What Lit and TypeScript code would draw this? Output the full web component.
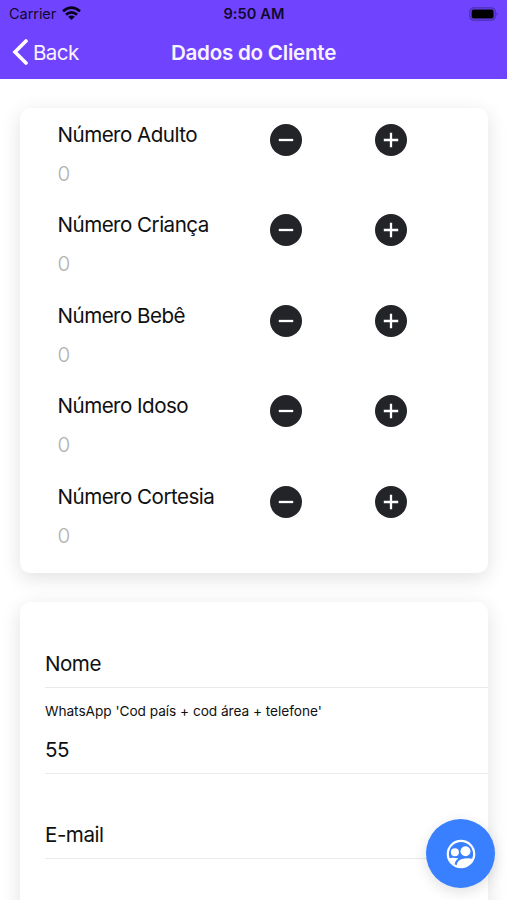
import { LitElement, html, css } from "lit";
import { customElement } from "lit/decorators.js";

@customElement("app-root")
export class AppRoot extends LitElement {
  static styles = css`
    :host { display: block; position: relative; height: 900px; overflow: hidden; background: #fff; font-family: Inter, "Liberation Sans", sans-serif; color: #101010; }
    * { box-sizing: border-box; }
    header { height: 79px; background: #7044ff; }
    .status { height: 27px; display: grid; grid-template-columns: 1fr auto 1fr; align-items: center; padding: 1px 8px 0 9px; color: #12082e; font-size: 14.6px; }
    .carrier { display: flex; align-items: center; gap: 6px; letter-spacing: -0.1px; }
    .wifi { width: 19px; height: 14px; margin-top: -2px; }
    .time { font-weight: 600; letter-spacing: 0.1px; }
    .battery { justify-self: end; width: 30px; height: 14px; margin-top: -1px; }
    .nav { height: 50px; display: grid; grid-template-columns: 1fr auto 1fr; align-items: center; padding: 0 12px; color: #f7f3ff; }
    .back { display: flex; align-items: center; gap: 5px; font-size: 20.6px; letter-spacing: -0.6px; }
    .chevron { width: 16px; height: 26px; }
    .title { font-size: 20.6px; font-weight: 600; letter-spacing: -0.25px; }
    .card { margin: 29px 19px 0 20px; border-radius: 10px; background: #fff; box-shadow: 0 5px 20px rgba(0, 0, 0, 0.12); }
    .counts { height: 465px; padding: 14px 0 0 37.5px; }
    .row { height: 90.4px; display: grid; grid-template-columns: 212px 105px 1fr; }
    .label { font-size: 20.6px; line-height: 26px; letter-spacing: -0.53px; }
    .value { font-size: 20.6px; font-weight: 300; line-height: 26px; margin-top: 13px; color: #b0b0b0; }
    .round { width: 32px; height: 32px; margin-top: 2px; }
    .form { height: 420px; padding: 1px 0 0 25px; }
    .field { border-bottom: 1.5px solid #e9e9e9; display: flex; flex-direction: column; justify-content: flex-end; height: 85.3px; font-size: 20.6px; line-height: 26px; letter-spacing: -0.5px; padding-bottom: 10px; }
    .small { font-size: 13.7px; line-height: 18px; letter-spacing: -0.05px; margin-bottom: 17px; }
    .fab { position: absolute; left: 426px; top: 819px; width: 69px; height: 69px; border-radius: 50%; background: #3880ff; box-shadow: 0 4px 14px rgba(0, 0, 0, 0.12); display: grid; place-items: center; }
    .people { width: 30px; height: 30px; }
  `;

  render() {
    return html`
      <header>
        <div class="status">
          <div class="carrier">Carrier
            <svg class="wifi" viewBox="0 0 19 14"><g fill="none" stroke="#08041a" stroke-width="2.7"><path d="M1 5.2Q9.5-2 18 5.2"/><path d="M4 8.6Q9.5 4 15 8.6"/></g><path d="M6.2 10.8Q9.5 8.2 12.8 10.8L9.5 14Z" fill="#08041a"/></svg>
          </div>
          <div class="time">9:50 AM</div>
          <svg class="battery" viewBox="0 0 30 14"><rect x=".8" y=".8" width="25.5" height="12.4" rx="4" fill="none" stroke="#4a2fae" stroke-width="1.2"/><rect x="2.6" y="2.6" width="22" height="8.8" rx="2" fill="#000"/><path d="M27.6 5v4q2-2 0-4" fill="#4a2fae"/></svg>
        </div>
        <div class="nav">
          <div class="back"><svg class="chevron" viewBox="0 0 16 26"><path d="M14 2 3 13 14 24" fill="none" stroke="#fff" stroke-width="3.6" stroke-linecap="round"/></svg>Back</div>
          <div class="title">Dados do Cliente</div>
        </div>
      </header>
      <section class="card counts">
        ${["Adulto", "Criança", "Bebê", "Idoso", "Cortesia"].map((n) => html`
          <div class="row">
            <div><div class="label">Número ${n}</div><div class="value">0</div></div>
            <svg class="round" viewBox="0 0 32 32"><circle cx="16" cy="16" r="16" fill="#222428"/><path d="M8.8 16h14.4" stroke="#fff" stroke-width="2.3"/></svg>
            <svg class="round" viewBox="0 0 32 32"><circle cx="16" cy="16" r="16" fill="#222428"/><path d="M8.8 16h14.4M16 8.8v14.4" stroke="#fff" stroke-width="2.3"/></svg>
          </div>`)}
      </section>
      <section class="card form">
        <div class="field">Nome</div>
        <div class="field"><div class="small">WhatsApp 'Cod país + cod área + telefone'</div>55</div>
        <div class="field">E-mail</div>
      </section>
      <div class="fab">
        <svg class="people" viewBox="0 0 30 30"><circle cx="15" cy="15" r="13.2" fill="none" stroke="#fff" stroke-width="2.2"/><g fill="#fff"><circle cx="8.9" cy="13.2" r="4"/><circle cx="19.5" cy="12.2" r="5"/><path d="M2.8 19.4Q7 18.2 12.4 19.6Q9 21.6 8.6 25.6Q4.6 23.6 2.8 19.4ZM10.6 27Q10.8 21.6 16 20Q21 18.6 27 19.8Q23.4 28.2 15 28.2Q12.4 28.2 10.6 27Z"/></g></svg>
      </div>
    `;
  }
}
